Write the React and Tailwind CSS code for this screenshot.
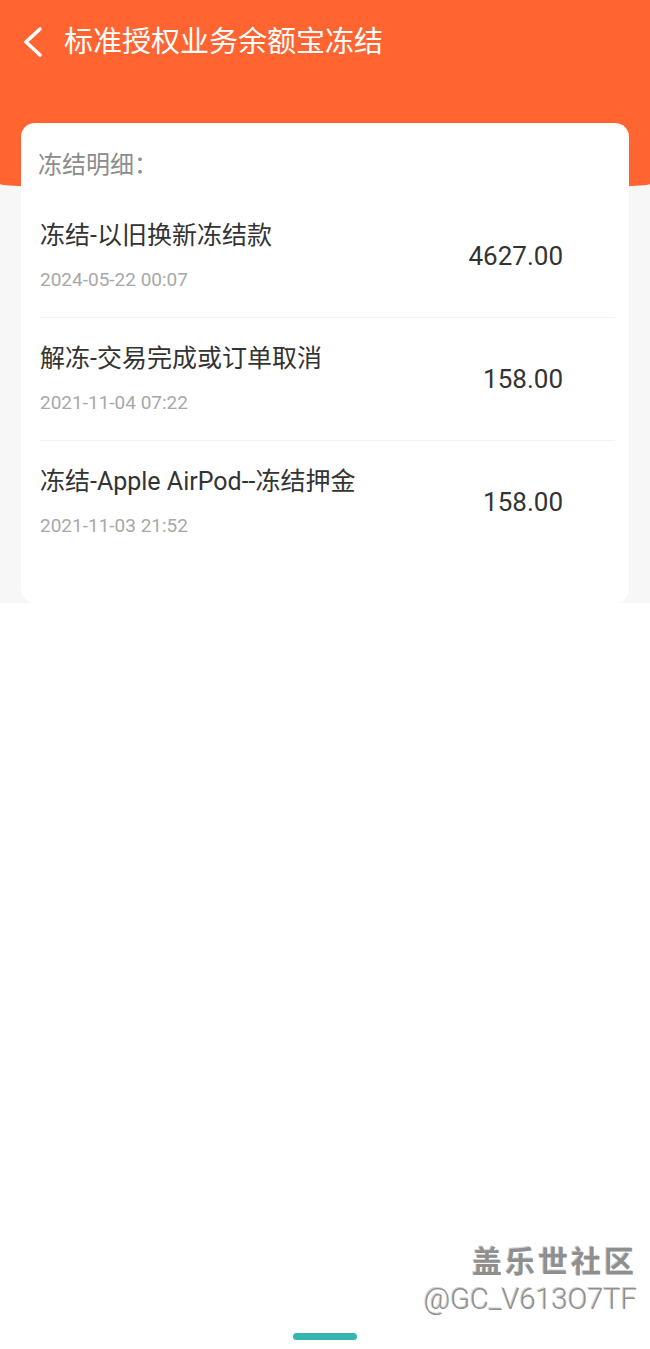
export default function App() {
  const rows = [
    { title: "冻结-以旧换新冻结款", date: "2024-05-22 00:07", amount: "4627.00" },
    { title: "解冻-交易完成或订单取消", date: "2021-11-04 07:22", amount: "158.00" },
    { title: "冻结-Apple AirPod--冻结押金", date: "2021-11-03 21:52", amount: "158.00" },
  ];

  return (
    <div className="relative min-h-screen bg-white font-['Roboto','Noto_Sans_CJK_SC',sans-serif]">
      <div className="bg-[#f7f7f7]">
        <div className="h-[190px] bg-[#ff6431] rounded-b-[50%_6px]">
          <div className="flex items-center h-[84px] pl-[22px]">
            <svg width="22" height="32" viewBox="0 0 22 32" fill="none">
              <polyline
                points="18,3 4,16 18,29"
                stroke="white"
                strokeWidth="3.6"
                strokeLinecap="round"
                strokeLinejoin="round"
              />
            </svg>
            <h1 className="ml-[20px] text-[29px] leading-[34px] text-white">
              标准授权业务余额宝冻结
            </h1>
          </div>
        </div>

        <div className="relative -mt-[67px] mx-[21px] bg-white rounded-[14px] pt-[26px] pb-[40px] pl-[19px] pr-[14px]">
          <div className="-ml-[2px] text-[24px] leading-[28px] text-[#8c8c8c] font-['Noto_Sans_CJK_SC',sans-serif]">
            冻结明细：
          </div>
          <div className="mt-[18px]">
            {rows.map((row, i) => (
              <div
                key={i}
                className={
                  "flex items-center justify-between py-[25px] " +
                  (i < rows.length - 1 ? "border-b border-[#f2f2f2]" : "")
                }
              >
                <div>
                  <div className="text-[25px] leading-[32px] text-[#333333]">
                    {row.title}
                  </div>
                  <div className="mt-[16px] text-[19px] leading-[24px] text-[#a8a8a8]">
                    {row.date}
                  </div>
                </div>
                <div className="pr-[52px] text-[26px] leading-[30px] text-[#333333]">
                  {row.amount}
                </div>
              </div>
            ))}
          </div>
        </div>
      </div>

      <div className="absolute right-[13px] bottom-[32px] flex flex-col items-end text-[#8f8f8f] [text-shadow:1px_1px_0_#ffffff,-1px_-1px_0_#d0d0d0]">
        <div className="text-[30px] leading-[36px] font-bold tracking-[3px] font-['Noto_Sans_CJK_SC',sans-serif]">
          盖乐世社区
        </div>
        <div className="mt-[4px] text-[29px] leading-[36px] font-light">
          @GC_V613O7TF
        </div>
      </div>

      <div className="absolute left-[293px] bottom-[9px] w-[64px] h-[7px] rounded-full bg-[#33b5b1]" />
    </div>
  );
}
